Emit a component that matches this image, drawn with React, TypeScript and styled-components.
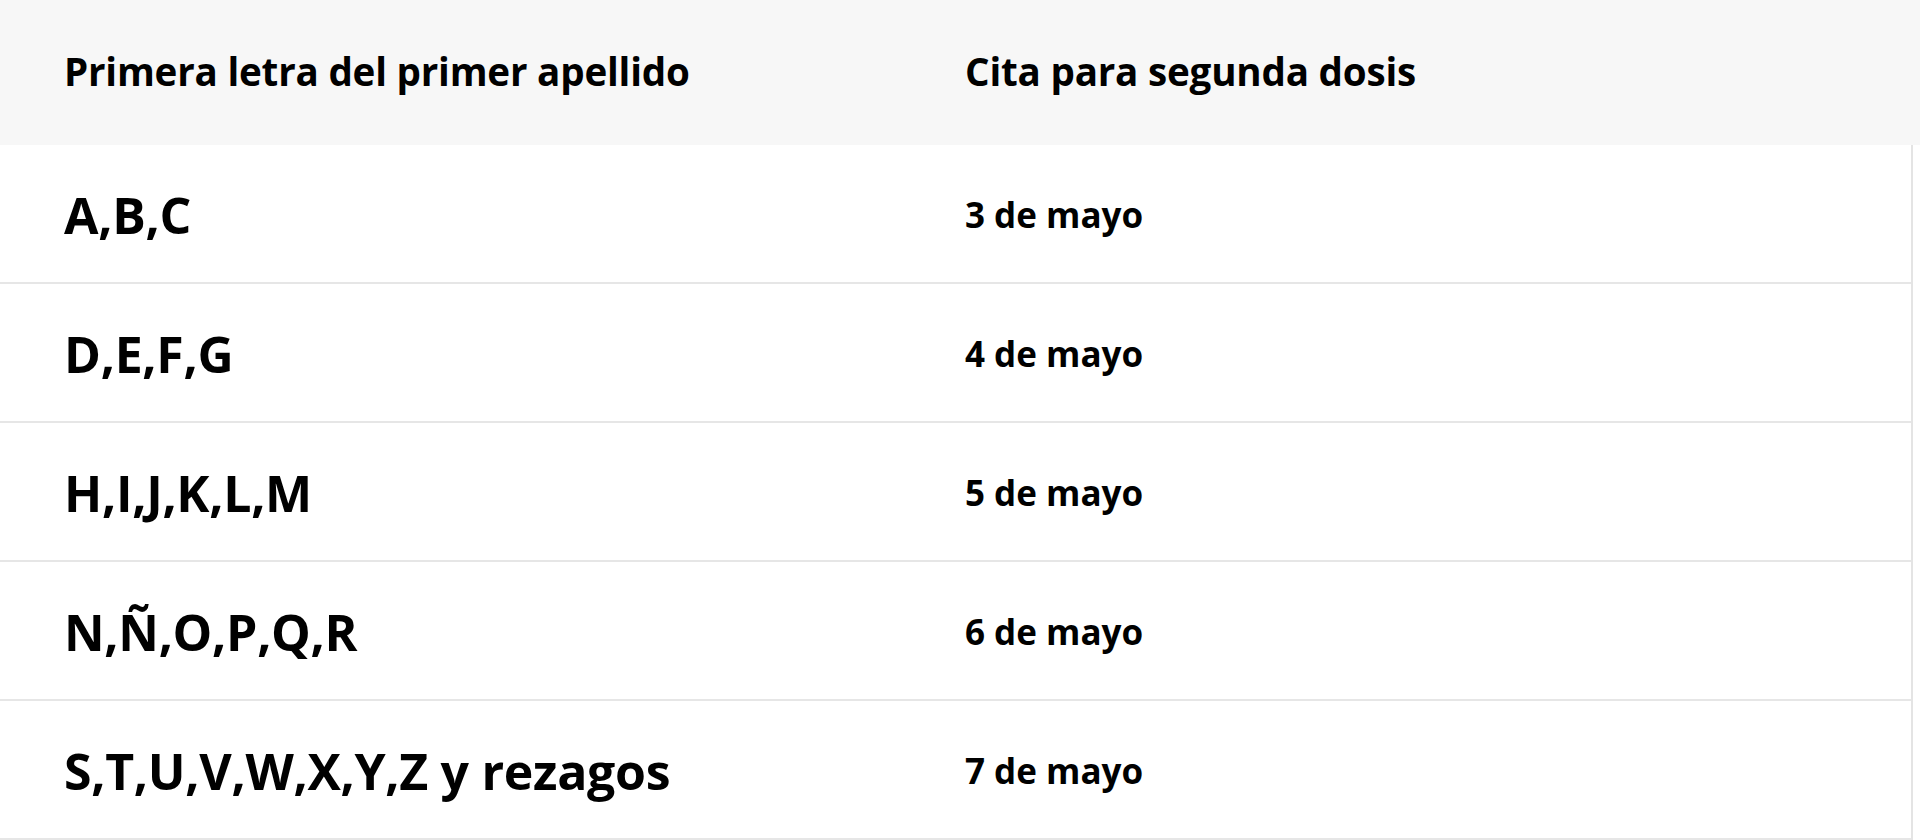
import React from "react";
import styled, { createGlobalStyle } from "styled-components";

const GlobalStyle = createGlobalStyle`
  html, body {
    margin: 0;
    padding: 0;
    background: #ffffff;
    font-family: "Open Sans", "Noto Sans", sans-serif;
  }
`;

const Table = styled.div`
  width: 1920px;
  display: flex;
  flex-direction: column;
  color: #000;
`;

const HeaderRow = styled.div`
  display: grid;
  grid-template-columns: 901px 1fr;
  height: 145px;
  box-sizing: border-box;
  padding-bottom: 4px;
  align-items: center;
  background: #f7f7f7;
`;

const HeaderCell = styled.div`
  padding-left: 64px;
  font-size: 38.6px;
  font-weight: 700;
  letter-spacing: -0.2px;
  white-space: nowrap;
`;

const Body = styled.div`
  width: 1913px;
  border-right: 2px solid #e4e4e4;
  box-sizing: border-box;
  display: flex;
  flex-direction: column;
`;

const Row = styled.div`
  display: grid;
  grid-template-columns: 901px 1fr;
  height: 139px;
  box-sizing: border-box;
  padding-top: 2px;
  align-items: center;
  border-bottom: 2px solid #e6e6e6;
`;

const Letters = styled.div`
  padding-left: 64px;
  font-size: 50px;
  font-weight: 700;
  letter-spacing: -0.3px;
  white-space: nowrap;
`;

const DateCell = styled.div`
  padding-left: 64px;
  font-size: 35px;
  font-weight: 700;
  white-space: nowrap;
`;

const rows = [
  { letters: "A,B,C", date: "3 de mayo" },
  { letters: "D,E,F,G", date: "4 de mayo" },
  { letters: "H,I,J,K,L,M", date: "5 de mayo" },
  { letters: "N,Ñ,O,P,Q,R", date: "6 de mayo" },
  { letters: "S,T,U,V,W,X,Y,Z y rezagos", date: "7 de mayo" },
];

export default function App() {
  return (
    <>
      <GlobalStyle />
      <Table>
        <HeaderRow>
          <HeaderCell>Primera letra del primer apellido</HeaderCell>
          <HeaderCell>Cita para segunda dosis</HeaderCell>
        </HeaderRow>
        <Body>
          {rows.map((r) => (
            <Row key={r.date}>
              <Letters>{r.letters}</Letters>
              <DateCell>{r.date}</DateCell>
            </Row>
          ))}
        </Body>
      </Table>
    </>
  );
}
